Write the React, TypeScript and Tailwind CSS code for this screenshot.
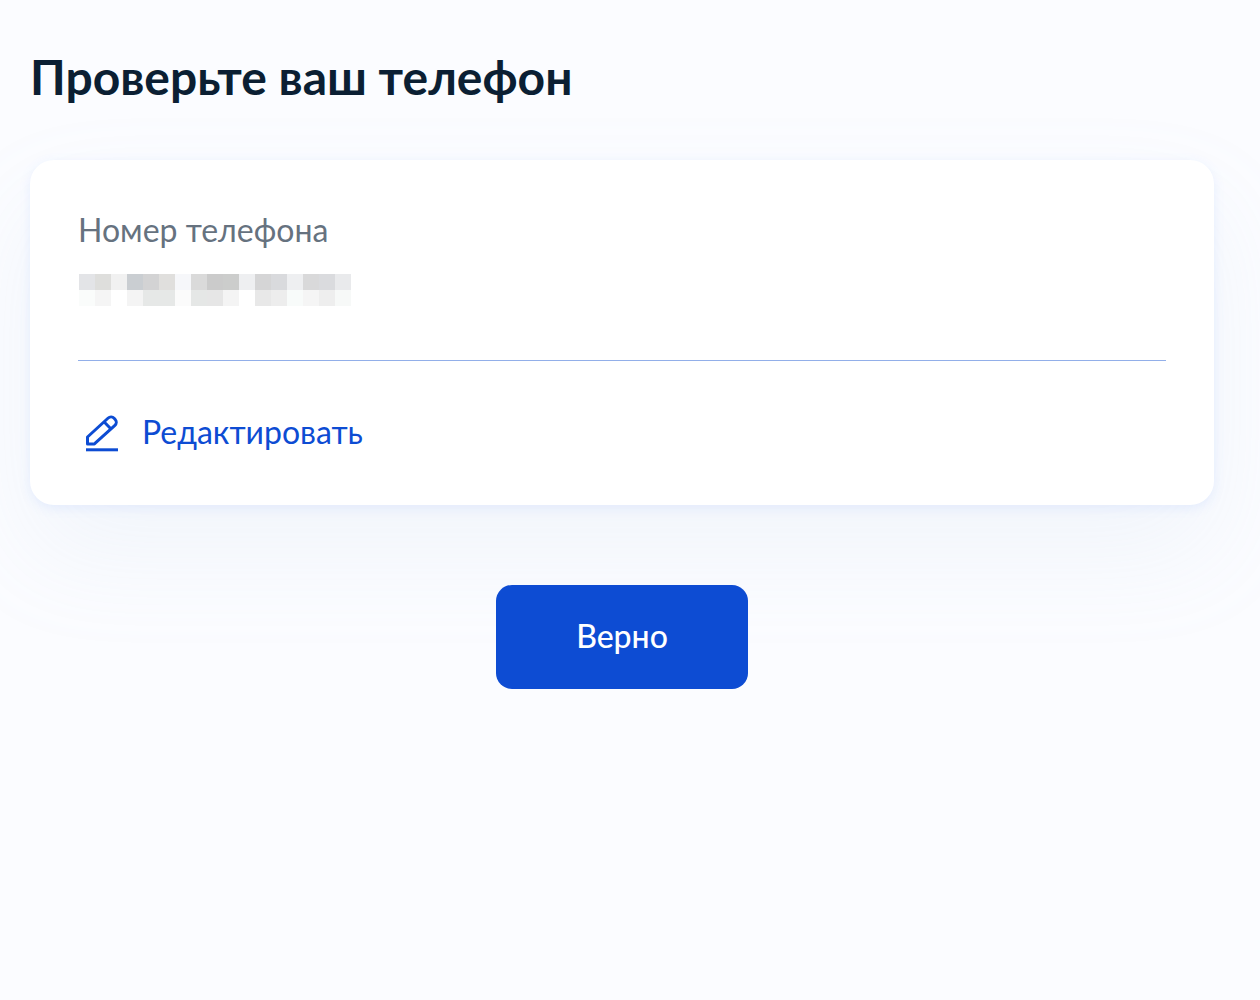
const topRow = [
  '#e3e4e7', '#dededc', '#f1f1f1', '#caced2', '#d3d3d4', '#e0dfdd', '#f6f7fa', '#dadada', '#cbcbcb',
  '#cccdcc', '#eeeff1', '#d5d5d6', '#d9dadd', '#eeeff1', '#d9d9da', '#dadbde', '#e9eaec',
];
const bottomRow = [
  '#fafcfb', '#f5f5f5', '#ffffff', '#f4f4f4', '#e6e8e7', '#e6e8e7', '#fbfbfb', '#e5e7e6', '#e6e6e6',
  '#f4f4f4', '#ffffff', '#e8e8e8', '#ededed', '#f8fbfa', '#f5f5f5', '#eeeeee', '#f7f9f8',
];

function HiddenNumber() {
  return (
    <div className="mt-[22px] grid w-fit grid-cols-17 pl-px" role="img" aria-label="Номер скрыт">
      {[...topRow, ...bottomRow].map((color, i) => (
        <span key={i} className="size-4" style={{ backgroundColor: color }} />
      ))}
    </div>
  );
}

function PencilIcon() {
  return (
    <svg className="size-12" viewBox="0 0 48 48" fill="none" stroke="currentColor" strokeWidth="3" strokeLinejoin="round" aria-hidden="true">
      <path d="M9.5 35V28L30.2 9a4.2 4.2 0 0 1 5.9 0.2L37.2 10.4a4.2 4.2 0 0 1 -0.3 5.9L17.2 34.2L16.4 35Z" />
      <path d="M26.2 13L32.8 19.8" />
      <path d="M8 40.8H40" />
    </svg>
  );
}

export default function App() {
  return (
    <main className="min-h-screen overflow-hidden bg-[#fbfcff] pt-12 pr-[46px] pb-12 pl-[30px] font-['Lato',sans-serif]">
      <h1 className="text-[48px] leading-[58px] font-bold text-[#0b1f33]">Проверьте ваш телефон</h1>
      <section className="mt-[54px] rounded-3xl bg-white px-12 pt-12 pb-12 shadow-[0_48px_104px_rgba(154,185,215,0.1),0_3px_12px_rgba(100,150,255,0.12)]">
        <p className="text-[32px] leading-[44px] text-[#66727f]">Номер телефона</p>
        <HiddenNumber />
        <hr className="mt-[54px] border-[#92afe9]" />
        <button type="button" className="mt-12 flex cursor-pointer items-start gap-4 text-[32px] leading-[46px] text-[#0d4cd3]">
          <PencilIcon />
          Редактировать
        </button>
      </section>
      <div className="mt-20 flex justify-center">
        <button type="button" className="cursor-pointer rounded-2xl bg-[#0d4cd3] px-20 pt-7 pb-[30px] text-[32px] leading-[46px] font-medium text-white">
          Верно
        </button>
      </div>
    </main>
  );
}
